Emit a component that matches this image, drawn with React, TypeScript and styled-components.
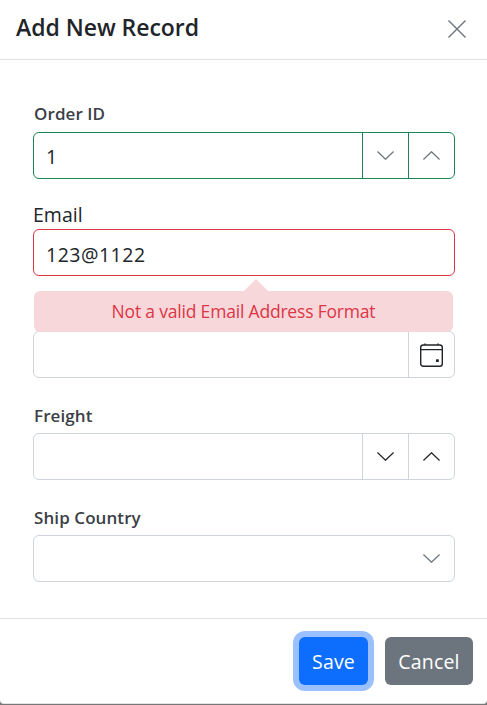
import React from "react";
import styled, { createGlobalStyle } from "styled-components";

const GlobalStyle = createGlobalStyle`
  * { box-sizing: border-box; }
  body {
    margin: 0;
    background: #777;
    color: #212529;
    font-family: "Segoe UI", "Open Sans", "Noto Sans", sans-serif;
    overflow: hidden;
  }
  button, input { font-family: inherit; }
`;

type Tone = "default" | "valid" | "invalid";
const toneColor: Record<Tone, string> = {
  default: "#ced4da",
  valid: "#198754",
  invalid: "#dc3545",
};

const Page = styled.div`
  height: 705px;
  background: #777;
`;

const Dialog = styled.div`
  display: flex;
  flex-direction: column;
  width: 487px;
  height: 704px;
  background: #fff;
  border-bottom: 1px solid #e4e4e4;
  border-radius: 0 0 4px 4px;
`;

const Header = styled.header`
  display: flex;
  align-items: center;
  justify-content: space-between;
  height: 60px;
  padding: 0 21px 5px 16px;
  border-bottom: 1px solid #dee2e6;
`;

const Title = styled.h1`
  margin: 0;
  font-size: 23px;
  line-height: 30px;
  font-weight: 550;
  letter-spacing: -0.03px;
  white-space: nowrap;
`;

const CloseButton = styled.button`
  display: flex;
  padding: 0;
  margin-top: 4px;
  border: 0;
  background: none;
  color: #6c757d;
`;

const Body = styled.main`
  display: flex;
  flex-direction: column;
  height: 558px;
  padding: 42px 32px 0 33px;
`;

const Field = styled.div`
  display: flex;
  flex-direction: column;
`;

const Label = styled.label<{ $lineHeight?: number }>`
  height: 30px;
  padding-left: 1px;
  color: #3b4046;
  font-size: 17px;
  line-height: ${(p) => p.$lineHeight ?? 25}px;
  font-weight: 550;
  letter-spacing: 0.08px;
`;

const PlainLabel = styled.label`
  height: 30px;
  margin-top: 20px;
  padding-left: 0;
  font-size: 19.5px;
  line-height: 32px;
  letter-spacing: 0;
`;

const Group = styled.div<{ $tone?: Tone; $gap?: number }>`
  display: flex;
  height: 47px;
  margin-bottom: ${(p) => p.$gap ?? 0}px;
  border: 1px solid ${(p) => toneColor[p.$tone ?? "default"]};
  border-radius: 6px;
`;

const Input = styled.input<{ $spinner?: boolean }>`
  flex: 1;
  min-width: 0;
  padding: ${(p) => (p.$spinner ? 1 : 3)}px 12px 0;
  border: 0;
  outline: 0;
  background: transparent;
  color: #212529;
  font-size: 19.5px;
  letter-spacing: 0.5px;
`;

const IconButton = styled.button<{ $tone?: Tone; $muted?: boolean; $plain?: boolean }>`
  display: flex;
  align-items: center;
  justify-content: center;
  width: 46px;
  padding: 0;
  border: 0;
  border-left: 1px solid
    ${(p) => (p.$plain ? "transparent" : toneColor[p.$tone ?? "default"])};
  background: none;
  color: ${(p) => (p.$muted ? "#6c757d" : "#212529")};
`;

const ErrorTip = styled.div`
  position: relative;
  z-index: 1;
  height: 41px;
  margin: 15px 2px -1px 1px;
  border-radius: 6px;
  background: #f8d7da;
  color: #dc3545;
  font-size: 17.5px;
  line-height: 41px;
  letter-spacing: -0.19px;
  text-align: center;
  white-space: nowrap;

  &::before {
    content: "";
    position: absolute;
    left: 210px;
    top: -12px;
    border: 12px solid transparent;
    border-top: 0;
    border-bottom-color: #f8d7da;
  }
`;

const Footer = styled.footer`
  display: flex;
  justify-content: flex-end;
  gap: 17px;
  padding: 18px 14px 0;
  border-top: 1px solid #dee2e6;
`;

const Action = styled.button<{ $primary?: boolean }>`
  width: ${(p) => (p.$primary ? 69 : 88)}px;
  height: 48px;
  padding: 0;
  border: 0;
  border-radius: 6px;
  background: ${(p) => (p.$primary ? "#0d6efd" : "#6c757d")};
  box-shadow: ${(p) => (p.$primary ? "0 0 0 6px #9ac1fe" : "none")};
  color: #fff;
  font-size: 19.5px;
  letter-spacing: 0.2px;
`;

const Chevron = ({ up = false }: { up?: boolean }) => (
  <svg width="17" height="9" viewBox="0 0 17 9" fill="none" stroke="currentColor" strokeWidth="1.3">
    <path d={up ? "M.4 8.5 8.5.8 16.6 8.5" : "M.4.5 8.5 8.2 16.6.5"} />
  </svg>
);

const CloseIcon = () => (
  <svg width="18" height="18" viewBox="0 0 18 18" fill="none" stroke="currentColor" strokeWidth="1.4">
    <path d="M.5.5 17.5 17.5M17.5.5.5 17.5" />
  </svg>
);

const CalendarIcon = () => (
  <svg width="23" height="24" viewBox="0 0 23 24" fill="none" stroke="currentColor" strokeWidth="1.4">
    <rect x=".7" y="2" width="21.6" height="21.2" rx="2.5" />
    <path d="M1 6.6h21M5 .4v1.6M18 .4v1.6" />
    <rect x="16" y="16.2" width="2.8" height="2.8" rx=".5" fill="currentColor" stroke="none" />
  </svg>
);

const Spinner = ({ tone, muted }: { tone?: Tone; muted?: boolean }) => (
  <>
    <IconButton $tone={tone} $muted={muted} aria-label="Decrease"><Chevron /></IconButton>
    <IconButton $tone={tone} $muted={muted} aria-label="Increase"><Chevron up /></IconButton>
  </>
);

export default function App() {
  return (
    <Page>
      <GlobalStyle />
      <Dialog role="dialog">
        <Header>
          <Title>Add New Record</Title>
          <CloseButton aria-label="Close"><CloseIcon /></CloseButton>
        </Header>
        <Body>
          <Field>
            <Label htmlFor="order" $lineHeight={23}>Order ID</Label>
            <Group $tone="valid">
              <Input id="order" $spinner defaultValue="1" />
              <Spinner tone="valid" muted />
            </Group>
          </Field>
          <Field>
            <PlainLabel htmlFor="email">Email</PlainLabel>
            <Group $tone="invalid">
              <Input id="email" defaultValue="123@1122" />
            </Group>
            <ErrorTip role="alert">Not a valid Email Address Format</ErrorTip>
          </Field>
          <Group $gap={25}>
            <Input aria-label="Order Date" />
            <IconButton aria-label="Open calendar"><CalendarIcon /></IconButton>
          </Group>
          <Field>
            <Label htmlFor="freight">Freight</Label>
            <Group $gap={25}>
              <Input id="freight" $spinner />
              <Spinner />
            </Group>
          </Field>
          <Field>
            <Label htmlFor="country">Ship Country</Label>
            <Group>
              <Input id="country" />
              <IconButton $muted $plain aria-label="Show countries"><Chevron /></IconButton>
            </Group>
          </Field>
        </Body>
        <Footer>
          <Action $primary>Save</Action>
          <Action>Cancel</Action>
        </Footer>
      </Dialog>
    </Page>
  );
}
